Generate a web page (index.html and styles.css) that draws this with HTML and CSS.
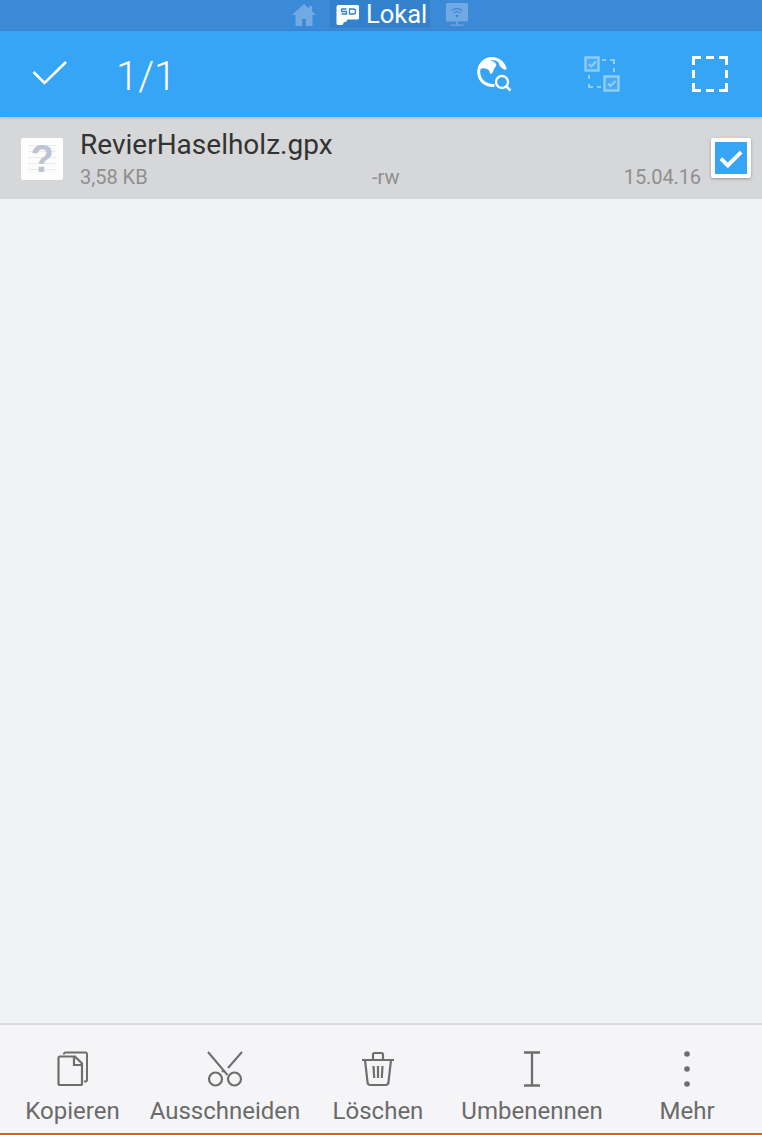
FILE: index.html
```html
<!DOCTYPE html>
<html lang="de">
<head>
<meta charset="utf-8">
<title>Lokal</title>
<link rel="stylesheet" href="styles.css">
</head>
<body>
<div class="app">
  <nav class="crumbs">
    <svg class="crumb-icon faded home" viewBox="0 0 26 24"><path d="M13 1 1 12h3.500v11h6.500v-7h4v7h6.500V12H25L21 8.300V3h-3v2.600z" fill="#fff"/></svg>
    <div class="crumb-active">
      <svg class="sd" viewBox="0 0 24 22"><path d="M3 1h19a1.500 1.500 0 0 1 1.500 1.500V14a1.500 1.500 0 0 1-1.500 1.500H12l-1.500 2.500-2 0L7 21H2.500A1.500 1.500 0 0 1 1 19.500V3a2 2 0 0 1 2-2z" fill="#fff"/><path d="M6 5h5M6 5v2.500h5V10H6M14 5v5h4a2 2 0 0 0 2-2V7a2 2 0 0 0-2-2z" fill="none" stroke="#3281cc" stroke-width="1.300"/></svg>
      <span>Lokal</span>
    </div>
    <svg class="crumb-icon faded net" viewBox="0 0 24 26"><rect x="0" y="0" width="24" height="20" rx="1.500" fill="#fff"/><path d="M12 20v3.500M5 24h14" stroke="#fff" stroke-width="1.500" fill="none"/><path d="M6 8.500a8.500 8.500 0 0 1 12 0M8.200 11a5.300 5.300 0 0 1 7.600 0" stroke="#3a8ad8" stroke-width="1.300" fill="none"/><circle cx="12" cy="14" r="1.500" fill="#3a8ad8"/></svg>
  </nav>

  <header class="toolbar">
    <svg class="tick" viewBox="0 0 36 26"><path d="M1.500 13 12.500 24 34 3" fill="none" stroke="#fff" stroke-width="2.500"/></svg>
    <div class="count">1/1</div>
    <div class="tools">
      <svg class="tool globe" viewBox="0 0 36 36"><path d="M16 2.500a13.500 13.500 0 1 0 2.500 26.800M16 2.500a13.500 13.500 0 0 1 13.200 11" fill="none" stroke="#fff" stroke-width="3"/><path d="M12 3c3 2 7 2.500 8 5 1 2-1 3-2 5s-1 5-4 5c0-3-1-4-3-5-3-1-5-1-7 0 0-5 3-9 8-10zM23 5c2 1 5 4 6 8-2 0-4-1-5-3s-2-3-1-5z" fill="#fff"/><circle cx="26" cy="26" r="6" fill="#36a5f6" stroke="#fff" stroke-width="2.400"/><path d="m30.500 30.500 4 4" stroke="#fff" stroke-width="2.600"/></svg>
      <svg class="tool select-inter" viewBox="0 0 36 36"><g fill="none" stroke="#fff"><rect x="1.500" y="1.500" width="13" height="13" stroke-width="2.400" fill="#ffffff30"/><rect x="20.500" y="20.500" width="14" height="14" stroke-width="2.400" fill="#ffffff30"/><path d="m5 8 2.500 2.500L12 5.500M24 27.500l2.500 2.500 5-5" stroke-width="2"/><path d="M18 4h4M26 4h4v4M30 12v4M5 19v4M5 28v3h4M13 31h4" stroke-width="2"/></g></svg>
      <svg class="tool select-all" viewBox="0 0 36 36"><path d="M1.500 9V1.500H9M14 1.500h8M27 1.500h7.500V9M34.500 14v8M34.500 27v7.500H27M22 34.500h-8M9 34.500H1.500V27M1.500 22v-8" fill="none" stroke="#fff" stroke-width="3"/></svg>
    </div>
  </header>

  <main class="list">
    <div class="row">
      <div class="file-icon">
        <span class="lines"></span>
        <span class="question">?</span>
      </div>
      <div class="info">
        <div class="name">RevierHaselholz.gpx</div>
        <div class="meta">
          <span class="size">3,58 KB</span>
          <span class="perm">-rw</span>
          <span class="date">15.04.16</span>
        </div>
      </div>
      <div class="check">
        <svg viewBox="0 0 30 30"><path d="M5.500 15.500 12 22 24.500 9.500" fill="none" stroke="#fff" stroke-width="3.600"/></svg>
      </div>
    </div>
  </main>

  <footer class="actions">
    <div class="action a-copy">
      <svg viewBox="0 0 36 36"><path d="M8 3.500V3a1.500 1.500 0 0 1 1.500-1.500h20A1.500 1.500 0 0 1 31 3v26a1.500 1.500 0 0 1-1.500 1.500H28" fill="none" stroke="#6e6e6e" stroke-width="2"/><path d="M4 5.500h15l7 7v20a1.500 1.500 0 0 1-1.500 1.500H4a1.500 1.500 0 0 1-1.500-1.500V7A1.500 1.500 0 0 1 4 5.500zM18 6v8h8" fill="#f5f5f7" stroke="#6e6e6e" stroke-width="2.200"/></svg>
      <span>Kopieren</span>
    </div>
    <div class="action a-cut">
      <svg viewBox="0 0 36 36"><path d="M1 1l19.500 23M35 1 21 17M15 21l1-1" fill="none" stroke="#6e6e6e" stroke-width="2"/><circle cx="8.500" cy="28" r="6.500" fill="none" stroke="#6e6e6e" stroke-width="2.200"/><circle cx="27.500" cy="28" r="6.500" fill="none" stroke="#6e6e6e" stroke-width="2.200"/></svg>
      <span>Ausschneiden</span>
    </div>
    <div class="action a-del">
      <svg viewBox="0 0 36 36"><path d="M1 9h32M12 8V3.500A1.500 1.500 0 0 1 13.500 2h7A1.500 1.500 0 0 1 22 3.500V8M4 9l2.500 22a3 3 0 0 0 3 3h15a3 3 0 0 0 3-3L30 9M12.500 15l.7 12M17 15v12M21.500 15l-.7 12" fill="none" stroke="#6e6e6e" stroke-width="2.200"/></svg>
      <span>Löschen</span>
    </div>
    <div class="action a-ren">
      <svg viewBox="0 0 36 36"><path d="M10 1.500h16M10 34.500h16M18 1.500v33" fill="none" stroke="#6e6e6e" stroke-width="2.300"/></svg>
      <span>Umbenennen</span>
    </div>
    <div class="action a-more">
      <svg viewBox="0 0 36 36"><circle cx="18" cy="3" r="2.800" fill="#6e6e6e"/><circle cx="18" cy="18" r="2.800" fill="#6e6e6e"/><circle cx="18" cy="33" r="2.800" fill="#6e6e6e"/></svg>
      <span>Mehr</span>
    </div>
  </footer>
</div>
</body>
</html>
```

FILE: styles.css
```css
* { box-sizing: border-box; }
html, body { margin: 0; padding: 0; }
body { font-family: Roboto, "Liberation Sans", sans-serif; background: #f1f2f4; }
.app { width: 762px; height: 1135px; display: flex; flex-direction: column; overflow: hidden; }

.crumbs { height: 31px; flex: none; background: #3a8ad8; display: flex; align-items: flex-start; padding-left: 291px; }
.crumb-icon { display: block; }
.faded { opacity: .28; }
.home { width: 26px; height: 24px; margin-top: 3px; }
.crumb-active { height: 28px; width: 100px; margin-left: 13px; background: #3281cc; display: flex; align-items: center; padding-left: 5px; gap: 6px; color: #fff; font-size: 25.500px; line-height: 28px; }
.sd { width: 25px; height: 22px; margin-top: 2px; }
.net { width: 24px; height: 24px; margin-left: 15px; margin-top: 3px; }

.toolbar { height: 86px; flex: none; background: #36a5f6; display: flex; align-items: center; color: #fff; position: relative; z-index: 1; box-shadow: 0 1px 3px rgba(0,0,0,.15); }
.tick { width: 36px; height: 26px; margin-left: 32px; margin-top: -5px; }
.count { font-size: 40px; font-weight: 300; margin-left: 48px; line-height: 44px; margin-top: 6px; width: 70px; }
.tools { margin-left: auto; display: flex; align-items: center; padding-right: 34px; gap: 72px; }
.tool { width: 36px; height: 36px; display: block; }
.select-inter { opacity: .45; }

.list { flex: 1; }
.row { height: 82px; background: #d6d7d9; display: flex; align-items: center; padding-left: 21px; }
.file-icon { width: 42px; height: 42px; background: #fff; border-radius: 2px; position: relative; margin-top: 1px; overflow: hidden; }
.lines { position: absolute; left: 7px; right: 7px; top: 7px; bottom: 7px; background: repeating-linear-gradient(#ececee 0 1px, #fcfcfc 1px 6px); }
.question { position: absolute; inset: 0; text-align: center; font-family: "Liberation Sans", sans-serif; font-weight: 700; font-size: 38px; line-height: 42px; color: #bcc4d2; }
.info { width: 621px; margin-left: 17px; margin-top: 2px; flex: none; }
.name { font-size: 28px; line-height: 32px; color: #333; margin-top: 0; }
.meta { position: relative; margin-top: 4px; height: 24px; font-size: 20px; line-height: 24px; color: #8f8f8f; display: flex; justify-content: space-between; }
.perm { position: absolute; left: 292px; }
.date { letter-spacing: -.1px; }
.check { width: 40px; height: 40px; margin-left: 10px; margin-top: -1px; background: #36a5f6; border: 4px solid #fff; border-radius: 2px; box-shadow: 0 1px 3px rgba(0,0,0,.3); flex: none; }
.check svg { display: block; width: 32px; height: 32px; }

.actions { height: 112px; flex: none; background: #f5f5f7; border-top: 2px solid #dcdcde; border-bottom: 2px solid #f0522a; position: relative; color: #6a6a6a; font-size: 24px; }
.action { position: absolute; top: 26px; display: flex; flex-direction: column; align-items: center; width: 180px; }
.action svg { width: 36px; height: 36px; display: block; }
.action span { margin-top: 11px; line-height: 27px; white-space: nowrap; }
.a-copy { left: -18px; }
.a-copy svg { margin-left: 4px; }
.a-copy span { margin-left: 1px; }
.a-cut { left: 135px; }
.a-del { left: 288px; }
.a-del svg { margin-left: 2px; }
.a-ren { left: 442px; }
.a-more { left: 597px; }
```
